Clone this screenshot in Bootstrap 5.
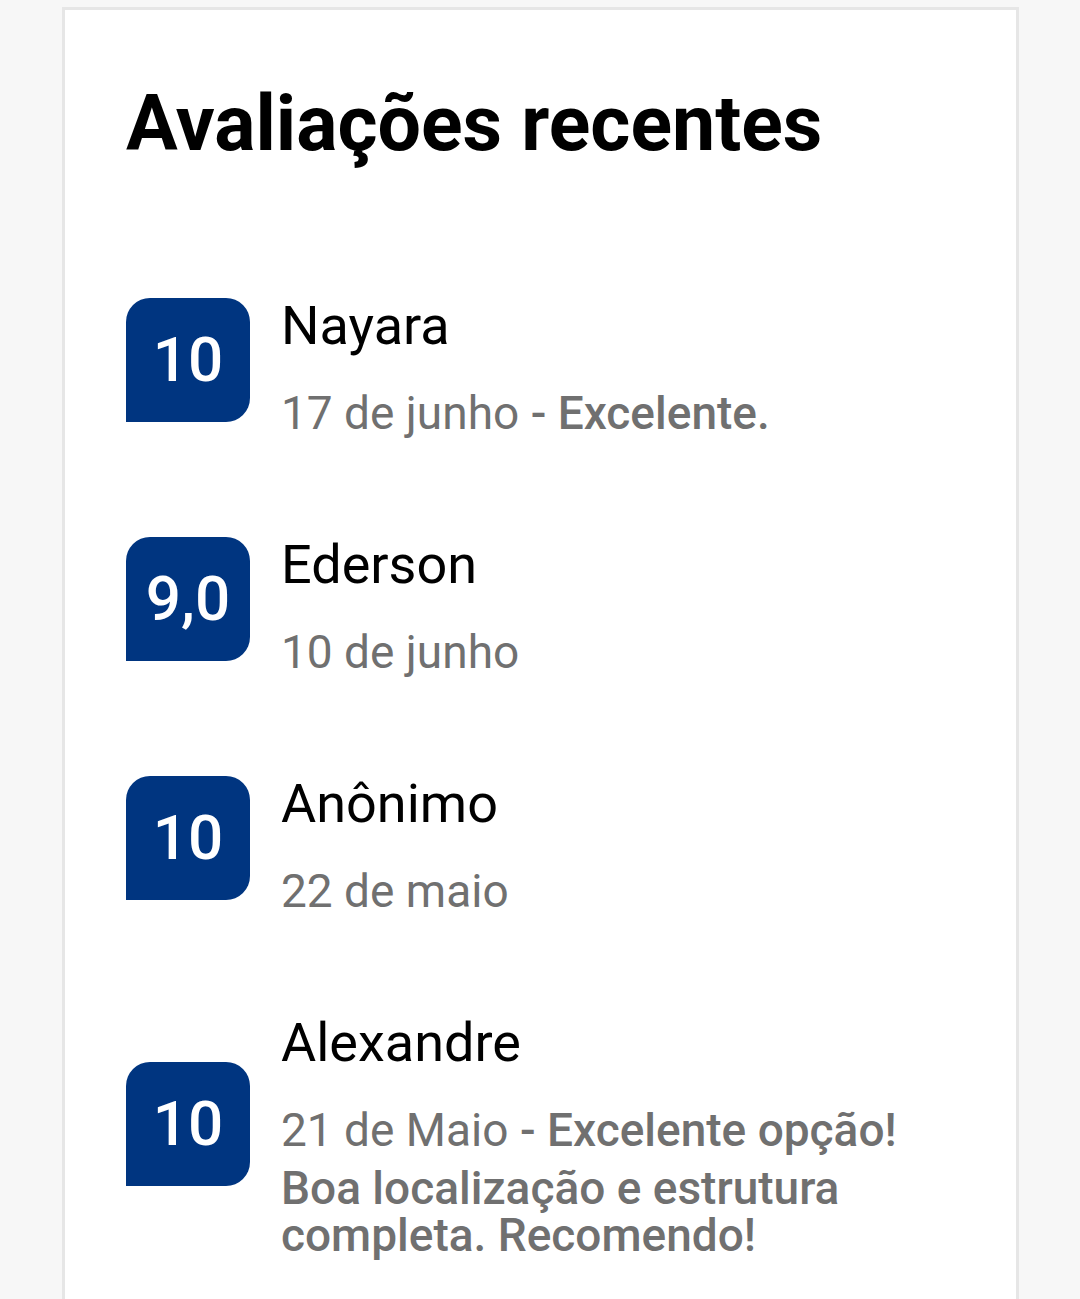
<!DOCTYPE html>
<html lang="pt-BR">
<head>
<meta charset="utf-8">
<meta name="viewport" content="width=device-width, initial-scale=1">
<title>Avaliações recentes</title>
<link href="https://cdn.jsdelivr.net/npm/bootstrap@5.3.0/dist/css/bootstrap.min.css" rel="stylesheet">
<style>
body { font-family: Roboto, "Liberation Sans", sans-serif; background: #f7f7f7; color: #000; overflow-x: hidden; }
.page { padding: 7px 61px 0 62px; }
.reviews { border: 3px solid #e6e6e6; border-bottom: 0; border-radius: 0; background: #fff; padding: 68px 61px 34px; min-height: calc(100vh - 7px); }
.title { font-size: 77px; line-height: 92px; font-weight: 700; }
.review-list { padding-top: 102px; gap: 63px; }
.review { gap: 31px; }
.score { width: 124px; height: 124px; padding-bottom: 2px; border-radius: 24px 24px 24px 0; background: #003580; color: #fff; font-size: 62px; font-weight: 500; }
.review-text { padding-top: 22px; }
.name { font-size: 54px; line-height: 64px; font-weight: 400; }
.note { font-size: 46px; line-height: 47px; color: #707070; padding-top: 20px; }
.note-date { line-height: 70px; }
.note strong { font-weight: 500; }
</style>
</head>
<body>
<main class="page">
<section class="card reviews">
<h1 class="title m-0">Avaliações recentes</h1>
<ul class="review-list list-unstyled d-flex flex-column m-0">
<li class="review d-flex align-items-center">
<div class="score d-flex flex-shrink-0 align-items-center justify-content-center">10</div>
<div class="review-text"><h2 class="name m-0">Nayara</h2><p class="note m-0"><span class="note-date">17 de junho</span> <strong>- Excelente.</strong></p></div>
</li>
<li class="review d-flex align-items-center">
<div class="score d-flex flex-shrink-0 align-items-center justify-content-center">9,0</div>
<div class="review-text"><h2 class="name m-0">Ederson</h2><p class="note m-0"><span class="note-date">10 de junho</span></p></div>
</li>
<li class="review d-flex align-items-center">
<div class="score d-flex flex-shrink-0 align-items-center justify-content-center">10</div>
<div class="review-text"><h2 class="name m-0">Anônimo</h2><p class="note m-0"><span class="note-date">22 de maio</span></p></div>
</li>
<li class="review d-flex align-items-center">
<div class="score d-flex flex-shrink-0 align-items-center justify-content-center">10</div>
<div class="review-text"><h2 class="name m-0">Alexandre</h2><p class="note m-0"><span class="note-date">21 de Maio</span> <strong>- Excelente opção! Boa localização e estrutura completa. Recomendo!</strong></p></div>
</li>
</ul>
</section>
</main>
<script src="https://cdn.jsdelivr.net/npm/bootstrap@5.3.0/dist/js/bootstrap.bundle.min.js"></script>
</body>
</html>
